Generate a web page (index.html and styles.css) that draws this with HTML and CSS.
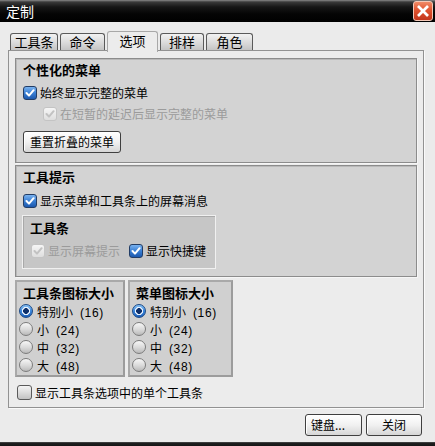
FILE: index.html
```html
<!DOCTYPE html>
<html lang="zh">
<head>
<meta charset="utf-8">
<title>定制</title>
<link rel="stylesheet" href="styles.css">
</head>
<body>
<div class="win">
  <div class="titlebar">
    <span class="title">定制</span>
    <span class="close"><svg viewBox="0 0 20 20" width="20" height="20"><path d="M5.5 5.5 L14.5 14.5 M14.5 5.5 L5.5 14.5" stroke="#fff" stroke-width="3" stroke-linecap="square" fill="none"/></svg></span>
  </div>

  <div class="tabs">
    <div class="tab t1">工具条</div>
    <div class="tab t2">命令</div>
    <div class="tab t3 active">选项</div>
    <div class="tab t4">排样</div>
    <div class="tab t5">角色</div>
  </div>

  <div class="panel">
    <div class="group g1">
      <div class="gtitle">个性化的菜单</div>
      <div class="row r1"><span class="cb"><svg viewBox="0 0 10 10"><path d="M1.5 5 L4 7.6 L8.6 2.2"/></svg></span><span>始终显示完整的菜单</span></div>
      <div class="row r2 indent dis"><span class="cb dis"><svg viewBox="0 0 10 10"><path d="M1.5 5 L4 7.6 L8.6 2.2"/></svg></span><span>在短暂的延迟后显示完整的菜单</span></div>
      <button class="btn reset">重置折叠的菜单</button>
    </div>

    <div class="group g2">
      <div class="gtitle">工具提示</div>
      <div class="row r1"><span class="cb"><svg viewBox="0 0 10 10"><path d="M1.5 5 L4 7.6 L8.6 2.2"/></svg></span><span>显示菜单和工具条上的屏幕消息</span></div>
      <div class="inner">
        <div class="gtitle">工具条</div>
        <div class="row r3">
          <span class="cb dis"><svg viewBox="0 0 10 10"><path d="M1.5 5 L4 7.6 L8.6 2.2"/></svg></span><span class="dis-text">显示屏幕提示</span>
          <span class="cb second"><svg viewBox="0 0 10 10"><path d="M1.5 5 L4 7.6 L8.6 2.2"/></svg></span><span>显示快捷键</span>
        </div>
      </div>
    </div>

    <div class="sizes">
      <div class="sbox b1">
        <div class="gtitle">工具条图标大小</div>
        <div class="rrow first"><span class="rb on"></span><span>特别小<span class="num">(16)</span></span></div>
        <div class="rrow"><span class="rb"></span><span>小<span class="num">(24)</span></span></div>
        <div class="rrow"><span class="rb"></span><span>中<span class="num">(32)</span></span></div>
        <div class="rrow"><span class="rb"></span><span>大<span class="num">(48)</span></span></div>
      </div>
      <div class="sbox b2">
        <div class="gtitle">菜单图标大小</div>
        <div class="rrow first"><span class="rb on"></span><span>特别小<span class="num">(16)</span></span></div>
        <div class="rrow"><span class="rb"></span><span>小<span class="num">(24)</span></span></div>
        <div class="rrow"><span class="rb"></span><span>中<span class="num">(32)</span></span></div>
        <div class="rrow"><span class="rb"></span><span>大<span class="num">(48)</span></span></div>
      </div>
    </div>

    <div class="row solo"><span class="cb off"></span><span>显示工具条选项中的单个工具条</span></div>
  </div>

  <div class="actions">
    <button class="btn kb">键盘...</button>
    <button class="btn cl">关闭</button>
  </div>

  <div class="footer"></div>
</div>
</body>
</html>
```

FILE: styles.css
```css
* { box-sizing: border-box; }

html, body {
  margin: 0;
  padding: 0;
}

body {
  width: 435px;
  height: 446px;
  overflow: hidden;
  background: #ebebeb;
  font-family: "Liberation Sans", "Noto Sans CJK SC", sans-serif;
  font-size: 12px;
  color: #000;
}

.win {
  display: flex;
  flex-direction: column;
  height: 446px;
}

/* Title bar */
.titlebar {
  height: 22px;
  display: flex;
  align-items: center;
  justify-content: space-between;
  background: linear-gradient(#8a8a8a 0, #3a3a3a 2px, #161616 7px, #050505 14px, #000 22px);
  padding-left: 6px;
  padding-right: 2px;
}

.title {
  color: #fff;
  font-size: 14px;
  line-height: 22px;
  font-family: "Noto Sans CJK SC", sans-serif;
}

.close {
  width: 20px;
  height: 20px;
  border-radius: 3px;
  border: 1px solid #f3c9b8;
  background: linear-gradient(#f08a66 0, #e0532f 45%, #c3341a 100%);
  display: flex;
  align-items: center;
  justify-content: center;
}

.close svg {
  display: block;
  width: 18px;
  height: 18px;
}

/* Tabs */
.tabs {
  display: flex;
  align-items: flex-end;
  gap: 2px;
  height: 19px;
  margin-top: 9px;
  padding-left: 10px;
  position: relative;
  z-index: 1;
}

.tab {
  height: 17px;
  border: 1px solid #5a5a5a;
  border-bottom: none;
  border-radius: 3px 3px 0 0;
  background: linear-gradient(#f2f2f2 0, #d8d8d8 60%, #c4c4c4 100%);
  font-family: "Noto Sans CJK SC", sans-serif;
  font-size: 13px;
  line-height: 16px;
  text-align: center;
  color: #000;
}

.t1 { width: 48px; }
.t2 { width: 45px; }
.t3 { width: 51px; }
.t4 { width: 44px; }
.t5 { width: 47px; }

.tab.active {
  height: 21px;
  margin-bottom: -2px;
  background: #ececec;
  border-color: #a8a8a8;
  line-height: 18px;
}

/* Panel */
.panel {
  height: 358px;
  margin: 0 11px 0 8px;
  border: 1px solid #929292;
  box-shadow: 1px 1px 0 #fafafa;
  background: #ececec;
  padding: 7px 6px 0 6px;
}

.group {
  border: 1px solid #8c8c8c;
  box-shadow: inset 1px 1px 0 #b9b9b9, 1px 1px 0 #f6f6f6;
  background: #d3d3d3;
  padding: 3px 6px 0 7px;
}

.g1 { height: 105px; margin-bottom: 2px; }
.g2 { height: 112px; margin-bottom: 3px; }

.gtitle {
  font-family: "Noto Sans CJK SC", sans-serif;
  font-weight: bold;
  font-size: 13px;
  line-height: 16px;
  height: 16px;
  white-space: nowrap;
}

.row {
  display: flex;
  align-items: center;
  gap: 3px;
  height: 19px;
  white-space: nowrap;
}

.g1 .r1 { margin-top: 5px; }
.g1 .r2 { margin-top: 2px; margin-left: 20px; }
.g2 .r1 { margin-top: 6px; }

.dis, .dis-text { color: #9b9b9b; }

/* checkboxes */
.cb {
  flex: none;
  width: 14px;
  height: 14px;
  border: 1px solid #223d66;
  border-radius: 3px;
  background: linear-gradient(#79b2ef 0, #3a7fd4 50%, #1c58ad 100%);
  display: flex;
  align-items: center;
  justify-content: center;
}

.cb svg {
  display: block;
  width: 10px;
  height: 10px;
}

.cb svg path {
  fill: none;
  stroke: #fff;
  stroke-width: 2;
  stroke-linecap: round;
  stroke-linejoin: round;
}

.cb.dis {
  border-color: #c4c4c4;
  background: linear-gradient(#f6f6f6, #dedede);
}

.cb.dis svg path {
  stroke: #c2c2c2;
}

.cb.off {
  border-color: #5a5a5a;
  background: linear-gradient(#f5f5f5 0, #dcdcdc 50%, #c2c2c2 100%);
  width: 15px;
  height: 15px;
}

.cb.second { margin-left: 6px; }

/* buttons */
.btn {
  font-family: "Noto Sans CJK SC", sans-serif;
  font-size: 12px;
  line-height: 18px;
  height: 22px;
  padding: 0 6px;
  color: #000;
  border: 1px solid #3f3f3f;
  border-radius: 3px;
  background: linear-gradient(#ffffff 0, #f1f1f1 50%, #d6d6d6 100%);
  box-shadow: inset 1px 1px 0 #fff;
  margin: 0;
}

.reset {
  display: block;
  width: 98px;
  margin-top: 8px;
  text-align: center;
}

/* inner group */
.inner {
  width: 194px;
  height: 54px;
  margin-top: 5px;
  margin-left: -1px;
  border: 1px solid #f0f0f0;
  box-shadow: inset 1px 1px 0 #a9a9a9;
  background: #c6c6c6;
  padding: 4px 0 0 7px;
}

.inner .r3 {
  margin-top: 5px;
  margin-left: 1px;
}

/* icon size boxes */
.sizes {
  display: flex;
  gap: 3px;
  height: 97px;
}

.sbox {
  border: 2px solid #a9a9a9;
  border-right-color: #9c9c9c;
  border-bottom-color: #9c9c9c;
  background: #d0d0d0;
  padding: 3px 2px 0 2px;
}

.b1 { width: 110px; }
.b2 { width: 105px; }

.sbox .gtitle { margin-left: 4px; }

.rrow {
  display: flex;
  align-items: center;
  gap: 4px;
  height: 18px;
  white-space: nowrap;
}

.num {
  margin-left: 7px;
  letter-spacing: 0.6px;
}

.rrow.first { margin-top: 1px; }

.rb {
  flex: none;
  width: 14px;
  height: 14px;
  border-radius: 50%;
  border: 1px solid #7c7c7c;
  background: linear-gradient(#f7f7f7 0, #d9d9d9 55%, #b9b9b9 100%);
}

.rb.on {
  border-color: #1d4a86;
  background:
    radial-gradient(circle at 50% 50%, #0d2f6a 0 2.6px, #e8f3ff 3.1px 3.9px, transparent 4.4px),
    linear-gradient(#8cc4f6 0, #3d8ae0 50%, #1b5cb5 100%);
}

/* solo checkbox row */
.solo {
  margin-top: 6px;
  margin-left: 2px;
  height: 18px;
}

/* bottom actions */
.actions {
  display: flex;
  justify-content: flex-end;
  gap: 4px;
  margin-top: 6px;
  padding-right: 13px;
}

.kb { width: 57px; text-align: left; padding-left: 5px; }
.cl { width: 56px; text-align: center; }

.footer {
  margin-top: auto;
  height: 4px;
  background: linear-gradient(#5a5a5a 0, #202020 1px, #151515 4px);
}
```
